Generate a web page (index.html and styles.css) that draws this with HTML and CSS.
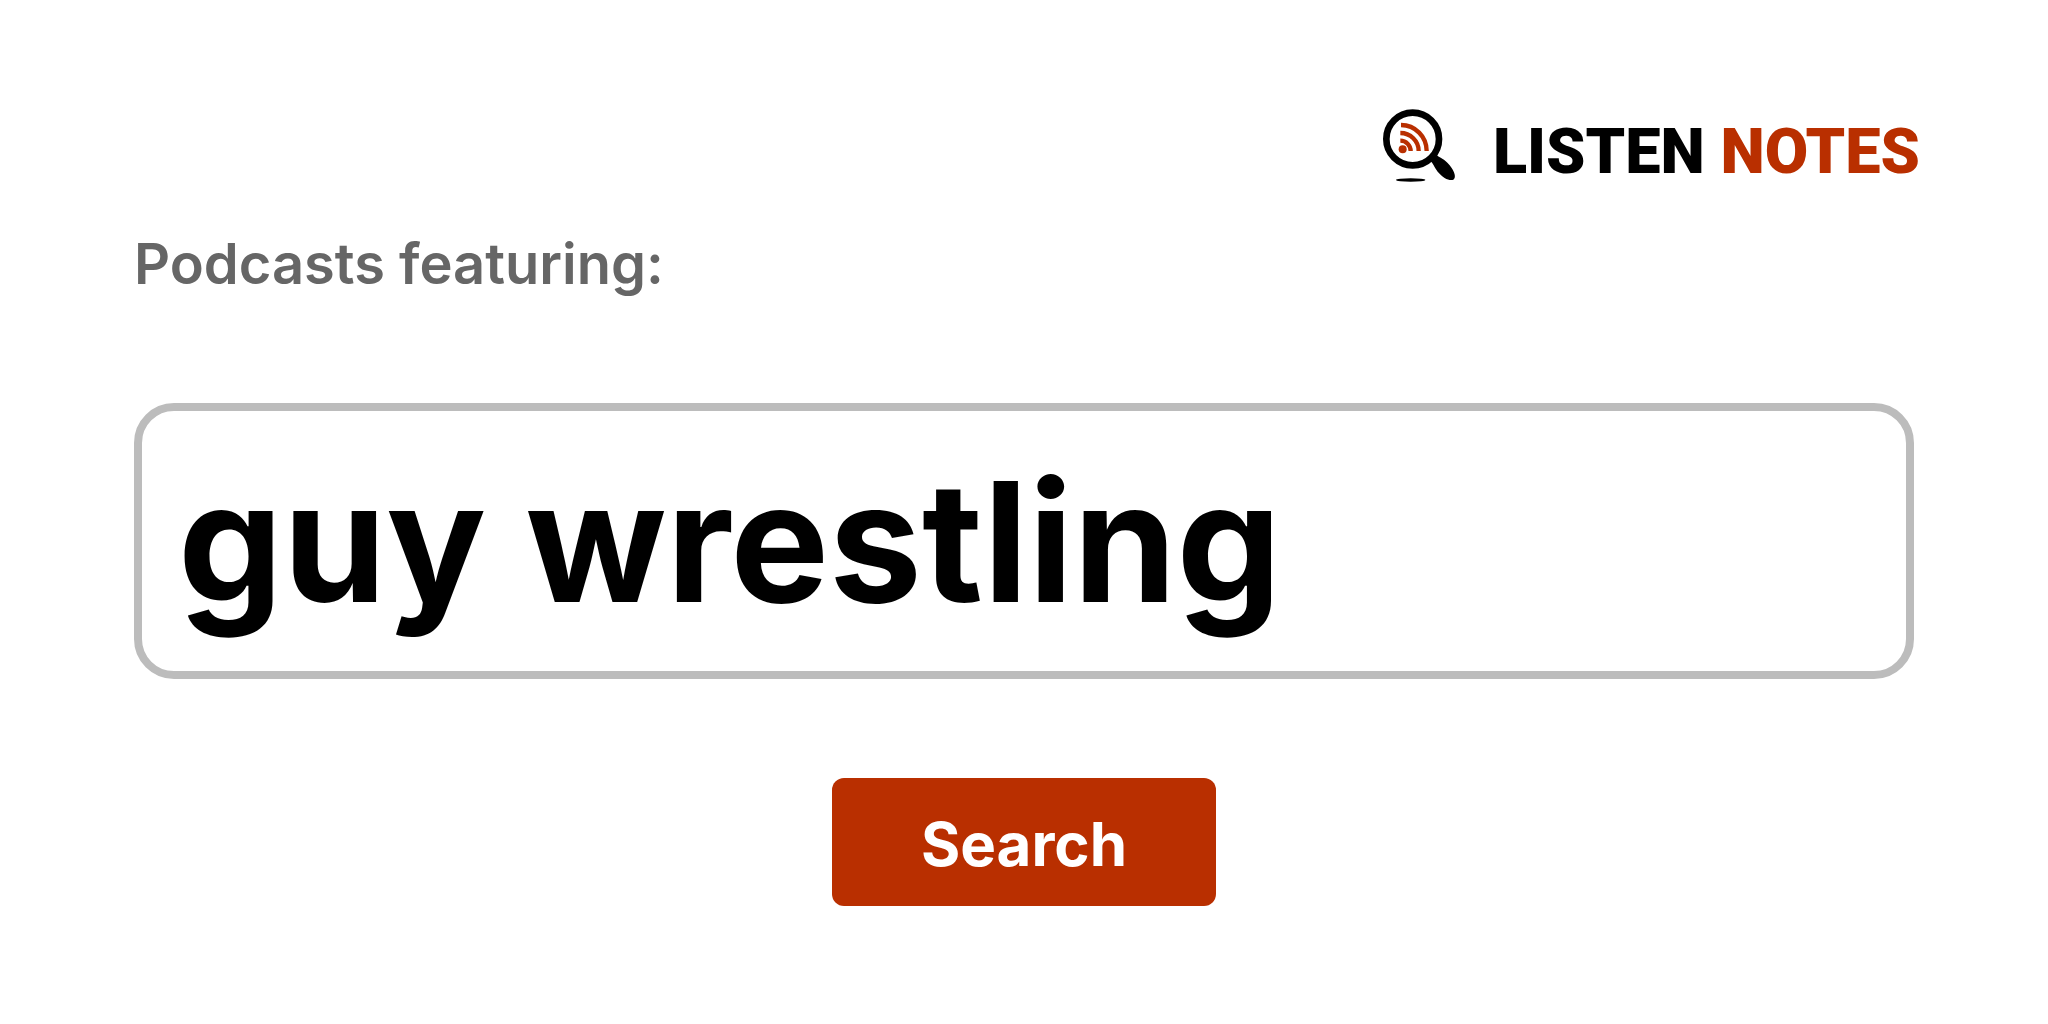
FILE: index.html
```html
<!doctype html>

<html lang="en">
<head>
    <meta charset="utf-8">
    <title>Listen Notes</title>
    <link rel="stylesheet" href="styles.css">
</head>

<body>
    <header class="header">
        <div class="logo">
            <svg class="logo-icon" viewBox="36 24 228 228" aria-hidden="true">
                <circle cx="131" cy="117" r="79" fill="none" stroke="#000000" stroke-width="20"/>
                <path d="M184 184 L204 166 C212 174 226 176 242 196 C258 216 262 234 253 239 C242 244 222 234 206 215 C192 198 194 190 184 184 Z" fill="#000000"/>
                <ellipse cx="125" cy="240" rx="44" ry="5" fill="#000000"/>
                <g fill="none" stroke="#b92f00" stroke-width="13">
                    <path d="M96 75 A77 78 0 0 1 173 153"/>
                    <path d="M94 99 A55 54 0 0 1 149 153"/>
                    <path d="M94 122 A31 31 0 0 1 125 153"/>
                </g>
                <circle cx="101" cy="148" r="12" fill="#b92f00"/>
            </svg>
            <div class="logo-text">LISTEN <span class="logo-notes">NOTES</span></div>
        </div>
    </header>

    <form class="search-form">
        <label class="search-label" for="search">Podcasts featuring:</label>
        <input class="search-input" id="search" type="text" value="guy wrestling" spellcheck="false">
        <button type="button" class="search-button">Search</button>
    </form>
</body>
</html>
```

FILE: styles.css
```css
* {
    box-sizing: border-box;
}

body {
    margin: 0;
    padding: 108px 128px 100px;
    background-color: #ffffff;
    font-family: Inter, "Liberation Sans", sans-serif;
}

.header {
    display: flex;
    justify-content: flex-end;
}

.logo {
    display: flex;
    align-items: flex-start;
    gap: 36px;
}

.logo-icon {
    width: 76px;
    height: 76px;
}

.logo-text {
    font-family: Roboto, sans-serif;
    font-size: 63px;
    font-weight: 900;
    line-height: 88px;
    color: #000000;
}

.logo-notes {
    color: #b92f00;
}

.search-form {
    display: flex;
    flex-direction: column;
    padding: 28px 6px 0;
}

.search-label {
    font-size: 56px;
    font-weight: 600;
    line-height: 80px;
    color: #666666;
}

.search-input {
    width: 100%;
    height: 276px;
    margin-top: 99px;
    padding: 0 36px;
    border: 8px solid #bcbcbc;
    border-radius: 40px;
    background-color: #ffffff;
    color: #000000;
    font-family: inherit;
    font-size: 166px;
    font-weight: 700;
}

.search-button {
    align-self: center;
    width: 384px;
    height: 128px;
    margin-top: 99px;
    padding: 4px 0 0;
    border: none;
    border-radius: 12px;
    background-color: #b92f00;
    color: #ffffff;
    font-family: inherit;
    font-size: 60px;
    font-weight: 700;
}
```
